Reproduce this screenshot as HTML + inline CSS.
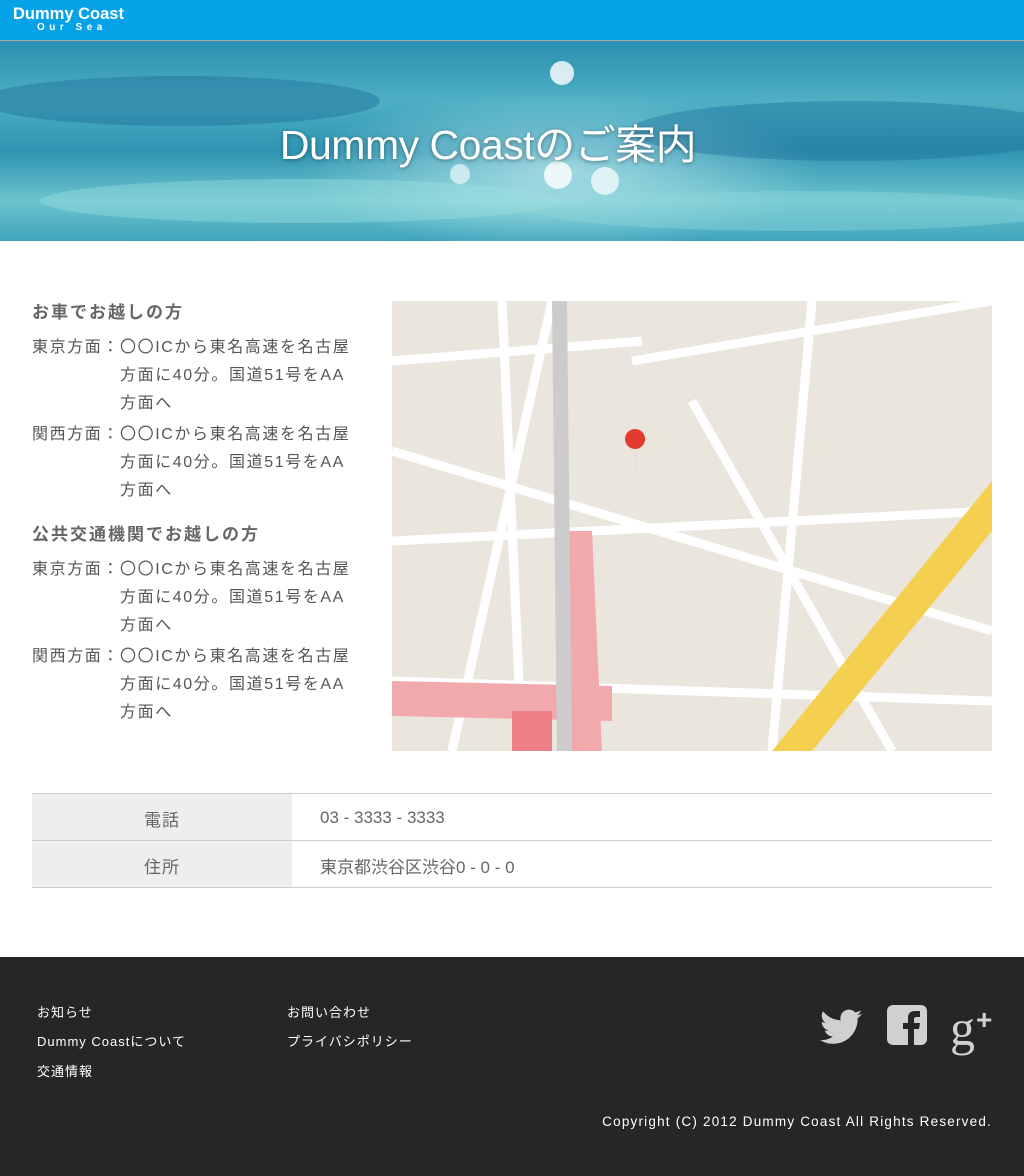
<!DOCTYPE html>
<html><head><meta charset="utf-8"><style>
*{margin:0;padding:0;box-sizing:border-box}
body{width:1024px;height:1176px;background:#fff;font-family:"Liberation Sans","Noto Sans CJK JP",sans-serif;color:#555;position:relative;overflow:hidden}
.hd{position:absolute;left:0;top:0;width:1024px;height:41px;background:#05a2e8;border-bottom:1px solid #aaa}
.logo{position:absolute;left:13px;top:6px;color:#fff;font-weight:bold;font-size:16.5px;line-height:16px}
.logo small{display:block;font-size:10px;letter-spacing:4.5px;margin-left:24px;line-height:12px}
.hero{position:absolute;left:0;top:41px;width:1024px;height:200px;overflow:hidden;
background:radial-gradient(ellipse 260px 80px at 560px 130px,rgba(220,250,250,.6),transparent),linear-gradient(180deg,#2b8fb0 0%,#4db0c4 30%,#2e94b2 55%,#6cc4cc 80%,#3fa5bd 100%)}
.hero h1{position:absolute;left:0;width:976px;top:70px;text-align:center;color:#fff;font-size:41px;font-weight:normal;text-shadow:0 1px 4px rgba(0,0,0,.4);letter-spacing:-.5px}
.left{position:absolute;left:32px;top:298px;width:330px;font-size:16px;letter-spacing:1.6px;color:#555}
.left h3{font-size:17px;color:#666;margin:0 0 8px;letter-spacing:2px}
.row{display:flex;line-height:28px;margin-top:3px}
.row .k{width:88px;flex:none}
.map{position:absolute;left:392px;top:301px;width:600px;height:450px;background:#ebe6dd;overflow:hidden}
table{position:absolute;left:32px;top:793px;width:960px;border-collapse:collapse;font-size:17px}
td{height:47px;border-top:1px solid #ccc;border-bottom:1px solid #ccc;vertical-align:middle;padding-top:2px}
td.l{width:260px;background:#eee;text-align:center;color:#666;letter-spacing:1px}
td.r{padding-left:28px;color:#666}
.ft{position:absolute;left:0;top:957px;width:1024px;height:219px;background:#262626;color:#fff;font-size:13px;letter-spacing:1px}
.ft a{position:absolute;color:#fff}
.copy{position:absolute;right:32px;top:157px;font-size:13.5px;letter-spacing:1.2px}
</style></head><body>
<div class="hd"><div class="logo">Dummy Coast<small>Our Sea</small></div></div>
<div class="hero">
<svg width="1024" height="200" style="position:absolute;left:0;top:0">
<ellipse cx="180" cy="60" rx="200" ry="25" fill="#1c6f98" opacity=".45"/>
<ellipse cx="850" cy="90" rx="220" ry="30" fill="#1c6f98" opacity=".4"/>
<ellipse cx="300" cy="160" rx="260" ry="22" fill="#9de0e0" opacity=".4"/>
<ellipse cx="800" cy="170" rx="260" ry="20" fill="#8ed8dc" opacity=".4"/>
<circle cx="562" cy="32" r="12" fill="#fff" opacity=".8"/>
<circle cx="558" cy="134" r="14" fill="#fff" opacity=".8"/>
<circle cx="605" cy="140" r="14" fill="#fff" opacity=".7"/>
<circle cx="460" cy="133" r="10" fill="#fff" opacity=".6"/>
</svg>
<h1>Dummy Coastのご案内</h1></div>
<div class="left">
<h3>お車でお越しの方</h3>
<div class="row" style="margin-top:11px"><span class="k">東京方面：</span><span>〇〇ICから東名高速を名古屋方面に40分。国道51号をAA方面へ</span></div>
<div class="row"><span class="k">関西方面：</span><span>〇〇ICから東名高速を名古屋方面に40分。国道51号をAA方面へ</span></div>
<h3 style="margin-top:15px">公共交通機関でお越しの方</h3>
<div class="row" style="margin-top:11px"><span class="k">東京方面：</span><span>〇〇ICから東名高速を名古屋方面に40分。国道51号をAA方面へ</span></div>
<div class="row"><span class="k">関西方面：</span><span>〇〇ICから東名高速を名古屋方面に40分。国道51号をAA方面へ</span></div>
</div>
<div class="map"><svg width="600" height="450">
<g stroke="#fff" stroke-width="9" fill="none">
<path d="M0 150 L600 330"/><path d="M0 240 L600 210"/><path d="M110 0 L130 450"/><path d="M240 60 L600 0"/><path d="M300 100 L500 450"/><path d="M0 380 L600 400"/><path d="M420 0 L380 450"/><path d="M0 60 L250 40"/><path d="M60 450 L160 0"/></g>
<path d="M175 230 L200 230 L210 450 L170 450Z" fill="#f2a9ae"/>
<path d="M0 380 L220 385 L220 420 L0 415Z" fill="#f2a9ae"/>
<path d="M120 410 L160 410 L160 450 L120 450Z" fill="#ee7f87"/>
<path d="M380 450 L600 180 L600 230 L420 450Z" fill="#f5cf50"/>
<path d="M160 0 L175 0 L180 450 L165 450Z" fill="#ccc"/>
<path d="M243 148 a10 10 0 1 1 0.1 0 L243 180Z" fill="#e23b2e"/>
</svg></div>
<table><tr><td class="l">電話</td><td class="r">03 - 3333 - 3333</td></tr><tr><td class="l">住所</td><td class="r">東京都渋谷区渋谷0 - 0 - 0</td></tr></table>
<div class="ft">
<a style="left:37px;top:45px">お知らせ</a><a style="left:37px;top:74px">Dummy Coastについて</a><a style="left:37px;top:104px">交通情報</a>
<a style="left:287px;top:45px">お問い合わせ</a><a style="left:287px;top:74px">プライバシポリシー</a>
<svg style="position:absolute;left:820px;top:52px" width="42" height="36" viewBox="0 0 24 20"><path fill="#d0d0d0" d="M24 2.4a9.8 9.8 0 0 1-2.8.8A4.9 4.9 0 0 0 23.3.5a9.9 9.9 0 0 1-3.1 1.2A4.9 4.9 0 0 0 11.8 6.2 14 14 0 0 1 1.7 1a4.9 4.9 0 0 0 1.5 6.6A4.9 4.9 0 0 1 1 7v.1a4.9 4.9 0 0 0 3.9 4.8 4.9 4.9 0 0 1-2.2.1 4.9 4.9 0 0 0 4.6 3.4A9.9 9.9 0 0 1 0 17.4 14 14 0 0 0 7.5 19.6c9.1 0 14-7.5 14-14v-.6A10 10 0 0 0 24 2.4z"/></svg>
<svg style="position:absolute;left:887px;top:48px" width="40" height="40" viewBox="0 0 40 40"><rect width="40" height="40" rx="6" fill="#d0d0d0"/><path fill="#262626" d="M21 40V24h-5v-6h5v-5c0-5 3-7 7-7h5v6h-3c-2 0-3 1-3 2v4h6l-1 6h-5v16z"/></svg>
<div style="position:absolute;left:950px;top:36px;color:#d0d0d0;font-family:'Liberation Serif',serif;font-size:50px;line-height:54px">g<span style="font-size:28px;vertical-align:16px;font-family:'Liberation Sans';font-weight:bold">+</span></div>
<div class="copy">Copyright (C) 2012 Dummy Coast All Rights Reserved.</div>
</div>
</body></html>
